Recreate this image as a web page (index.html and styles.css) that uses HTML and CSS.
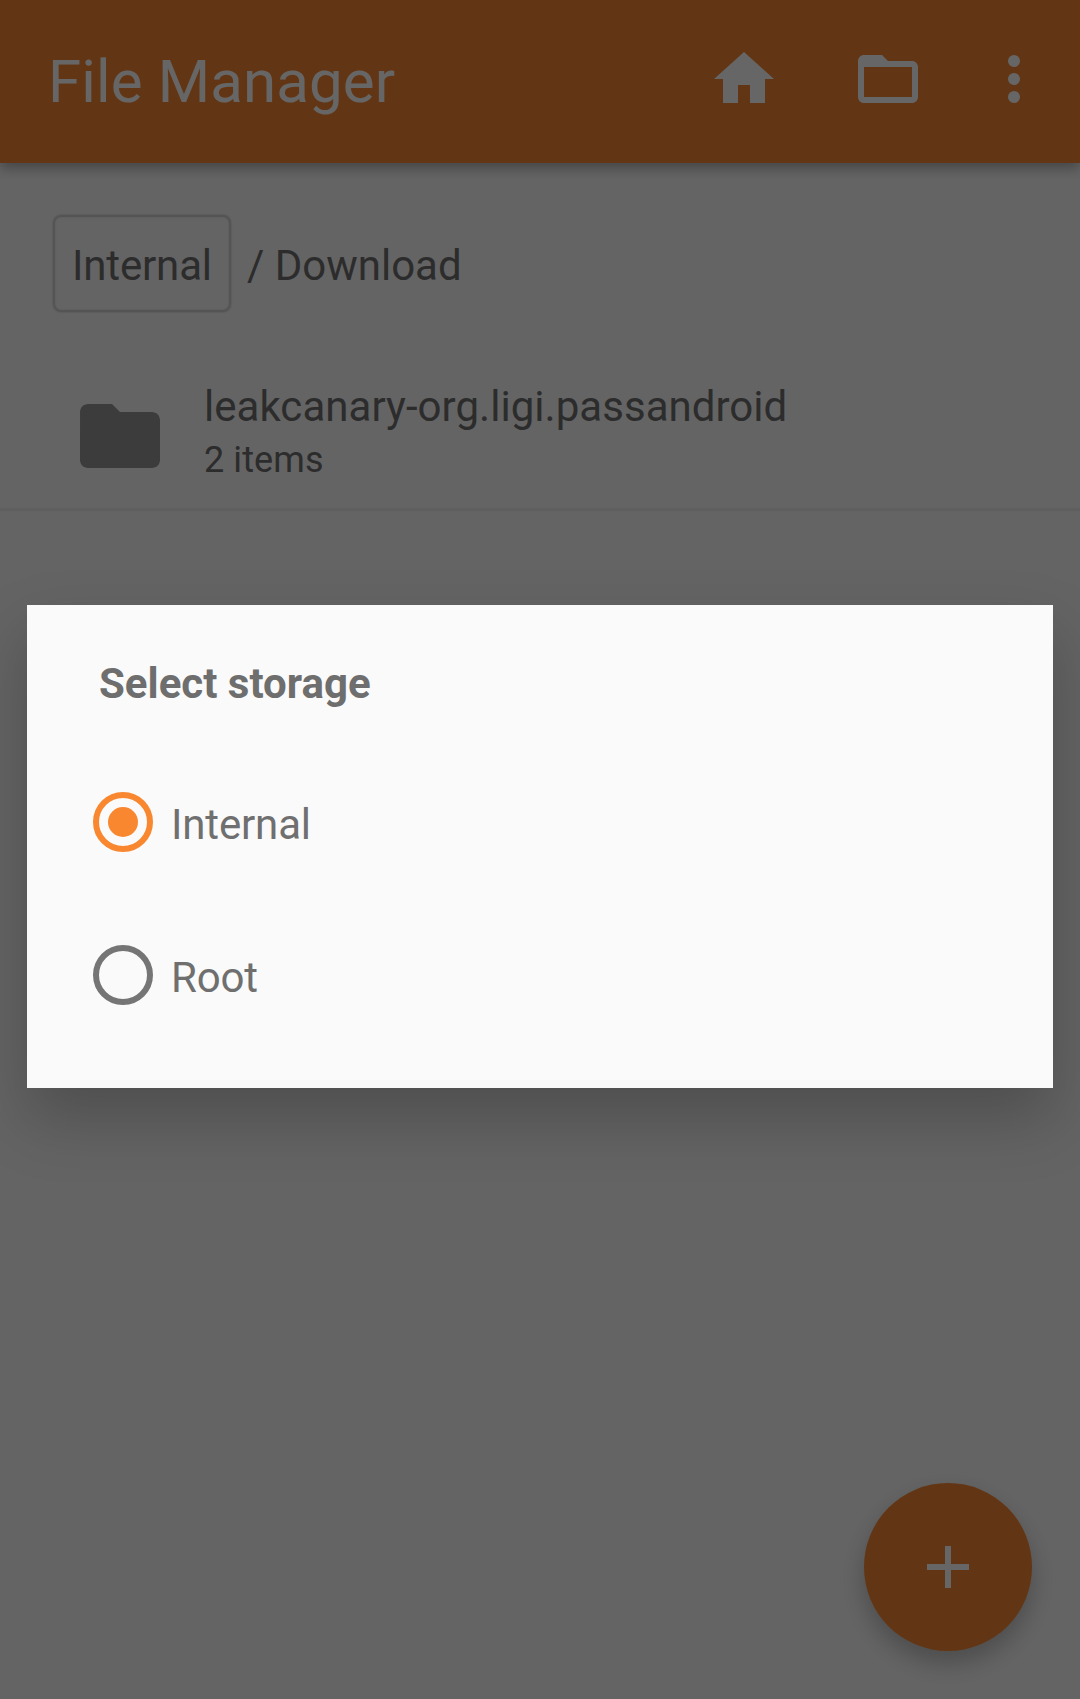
FILE: index.html
```html
<!DOCTYPE html>
<html lang="en">
<head>
<meta charset="utf-8">
<title>File Manager</title>
<link rel="stylesheet" href="styles.css">
</head>
<body>
<div class="screen">
  <header class="app-bar">
    <h1 class="app-title">File Manager</h1>
    <nav class="actions">
      <svg class="action" viewBox="0 0 24 24"><path d="M10 20v-6h4v6h5v-8h3L12 3 2 12h3v8z"/></svg>
      <svg class="action" viewBox="0 0 24 24"><path d="M20 6h-8l-2-2H4c-1.1 0-1.99.9-1.99 2L2 18c0 1.1.9 2 2 2h16c1.1 0 2-.9 2-2V8c0-1.1-.9-2-2-2zm0 12H4V8h16v10z"/></svg>
      <svg class="action overflow" viewBox="0 0 24 24"><circle cx="12" cy="6" r="2"/><circle cx="12" cy="12" r="2"/><circle cx="12" cy="18" r="2"/></svg>
    </nav>
  </header>
  <main>
    <div class="breadcrumbs">
      <span class="crumb-root">Internal</span>
      <span class="crumb">/ Download</span>
    </div>
    <div class="item">
      <svg class="item-icon" viewBox="0 0 24 24"><path d="M10 4H4c-1.1 0-1.99.9-1.99 2L2 18c0 1.1.9 2 2 2h16c1.1 0 2-.9 2-2V8c0-1.1-.9-2-2-2h-8l-2-2z"/></svg>
      <div class="item-text">
        <div class="item-name">leakcanary-org.ligi.passandroid</div>
        <div class="item-details">2 items</div>
      </div>
    </div>
  </main>
  <div class="fab"><svg class="fab-icon" viewBox="0 0 24 24"><path d="M19 13h-6v6h-2v-6H5v-2h6V5h2v6h6v2z"/></svg></div>
  <div class="scrim">
    <section class="dialog">
      <h2 class="dialog-title">Select storage</h2>
      <div class="option"><span class="radio checked"></span><span class="label">Internal</span></div>
      <div class="option"><span class="radio"></span><span class="label">Root</span></div>
    </section>
  </div>
</div>
</body>
</html>
```

FILE: styles.css
```css
* {
  box-sizing: border-box;
}

body {
  margin: 0;
  font-family: Roboto, "Liberation Sans", sans-serif;
  font-size: 42px;
  line-height: 50px;
  color: #6f6f6f;
}

.screen {
  position: relative;
  height: 1699px;
  overflow: hidden;
  background: #fafafa;
}

.app-bar {
  display: flex;
  align-items: center;
  justify-content: space-between;
  height: 163px;
  padding: 0 30px 0 48px;
  background: #f68632;
  box-shadow: 0 5px 12px rgba(0, 0, 0, 0.32);
}

.app-title {
  margin: 0;
  font-size: 60px;
  font-weight: 400;
  line-height: 72px;
  letter-spacing: 0.13px;
  color: #fff;
}

.actions {
  display: flex;
  gap: 72px;
  margin-bottom: 5px;
}

.action {
  width: 72px;
  height: 72px;
  fill: #fff;
}

.overflow {
  margin-left: -18px;
}

.breadcrumbs {
  display: flex;
  align-items: center;
  gap: 16px;
  padding: 52px 53px 0;
}

.crumb-root {
  height: 97px;
  padding: 24px 17px 0;
  border: 2px solid #d2d2d2;
  border-radius: 8px;
  box-shadow: 0 0 2px rgba(0, 0, 0, 0.25), inset 0 0 2px rgba(0, 0, 0, 0.15);
  letter-spacing: -0.15px;
}

.crumb {
  padding-top: 4px;
}

.item {
  display: flex;
  height: 199px;
  padding: 70px 0 0 72px;
  border-bottom: 3px solid #ededed;
}

.item-icon {
  width: 96px;
  height: 96px;
  margin-top: 6px;
  fill: #969696;
}

.item-text {
  margin-left: 36px;
}

.item-name {
  letter-spacing: 0.04px;
}

.item-details {
  margin-top: 7px;
  font-size: 36px;
  line-height: 42px;
  letter-spacing: 0.1px;
}

.fab {
  position: absolute;
  right: 48px;
  bottom: 48px;
  display: grid;
  place-items: center;
  width: 168px;
  height: 168px;
  border-radius: 50%;
  background: #f68632;
  box-shadow: 0 12px 24px rgba(0, 0, 0, 0.24);
}

.fab-icon {
  width: 72px;
  height: 72px;
  fill: #fff;
}

.scrim {
  position: absolute;
  inset: 0;
  padding: 605px 27px 0;
  background: rgba(0, 0, 0, 0.6);
}

.dialog {
  height: 483px;
  padding: 54px 66px 0;
  background: #fafafa;
  box-shadow: 0 30px 60px rgba(0, 0, 0, 0.22);
}

.dialog-title {
  margin: 0 0 38px 6px;
  font-size: 42px;
  font-weight: 700;
  line-height: 50px;
  color: #6e6e6e;
}

.option {
  display: flex;
  align-items: center;
  gap: 18px;
  height: 153px;
  padding-bottom: 3px;
}

.radio {
  display: grid;
  place-items: center;
  width: 60px;
  height: 60px;
  border: 6px solid #757575;
  border-radius: 50%;
}

.checked {
  border-color: #f8872f;
}

.checked::after {
  content: "";
  width: 30px;
  height: 30px;
  border-radius: 50%;
  background: #f8872f;
}

.label {
  padding-top: 5px;
  letter-spacing: -0.15px;
}
```
